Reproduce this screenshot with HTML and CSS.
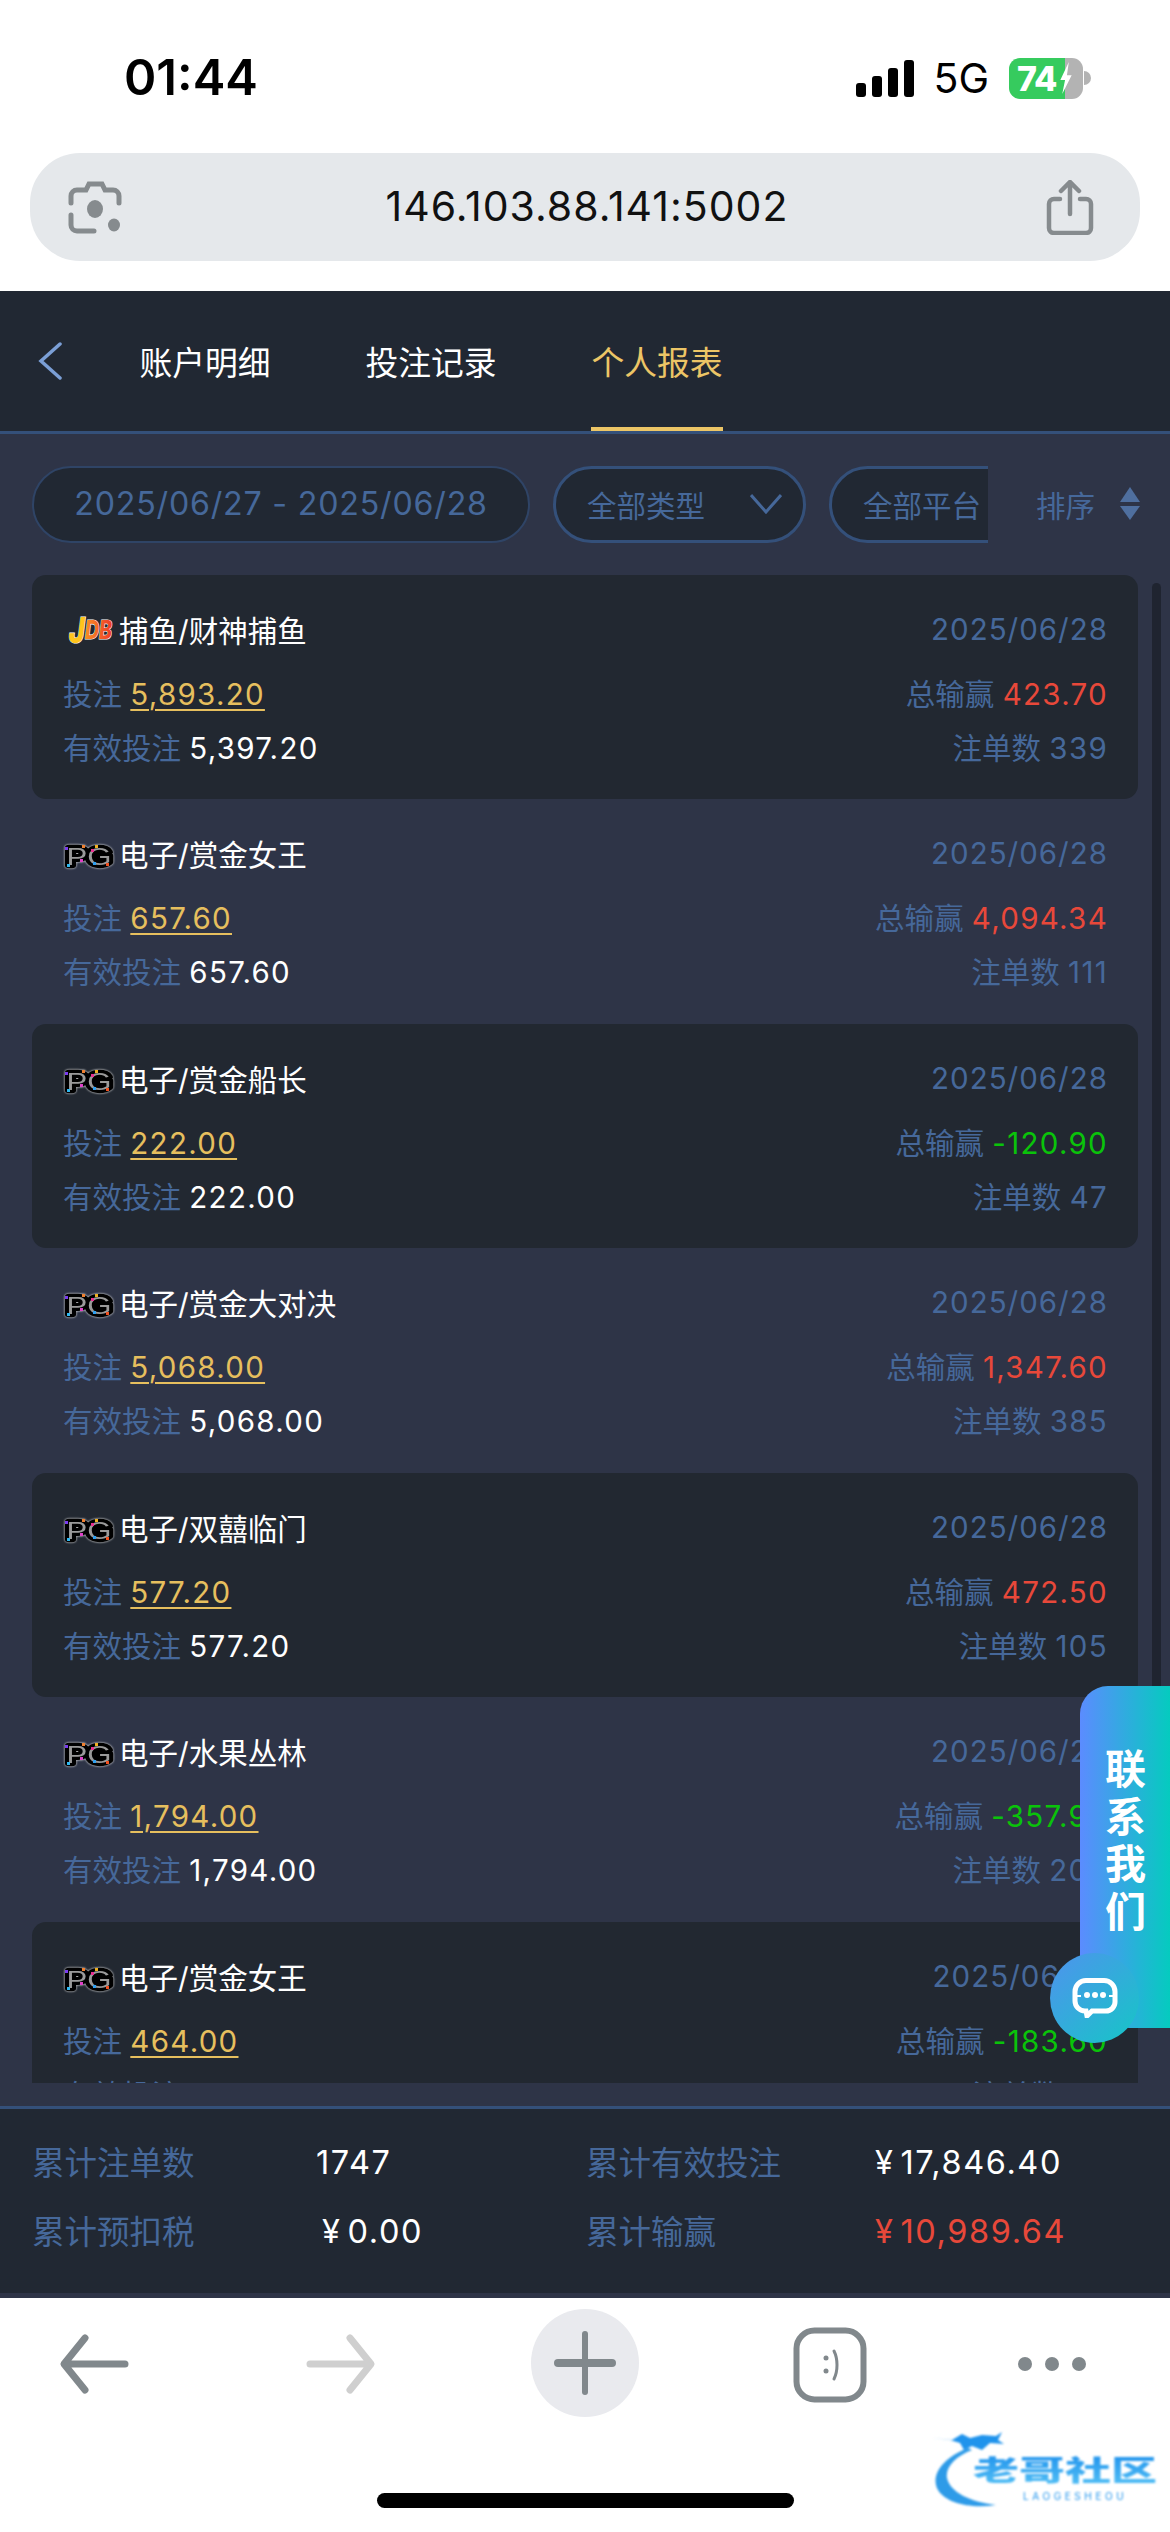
FILE: index.html
```html
<!DOCTYPE html>
<html lang="zh-CN">

<head>
    <meta charset="UTF-8">
    <meta name="viewport" content="width=device-width, initial-scale=1.0">
    <title>个人报表</title>
    <link rel="stylesheet" href="styles.css">
</head>

<body>
    <!-- coloured corners of the PG logo -->
    <svg class="sprite" aria-hidden="true">
        <symbol id="pg-dots" viewBox="0 0 49 24">
            <rect x="1" y="3" width="3" height="3" fill="#7a3cf0" />
            <rect x="3" y="20" width="3" height="3" fill="#30b8f0" />
            <rect x="16" y="15" width="3" height="3" fill="#e040c8" />
            <rect x="18" y="1" width="3" height="3" fill="#f08030" />
            <rect x="27" y="5" width="3" height="3" fill="#e83090" />
            <rect x="31" y="1" width="3" height="3" fill="#f0b020" />
            <rect x="29" y="18" width="3" height="3" fill="#30a0f0" />
            <rect x="42" y="19" width="3" height="3" fill="#f05020" />
        </symbol>
    </svg>

    <div class="phone-top">
        <div class="status-bar">
            <span class="clock">01:44</span>
            <div class="status-right">
                <div class="signal">
                    <i class="bar1"></i><i class="bar2"></i><i class="bar3"></i><i class="bar4"></i>
                </div>
                <span class="network">5G</span>
                <div class="battery">
                    <span class="level">74</span>
                    <svg class="bolt" viewBox="0 0 14 34">
                        <path d="M10 0L1 19h5L3 34l10-20H8z" fill="#fff" />
                    </svg>
                </div>
                <i class="battery-cap"></i>
            </div>
        </div>
        <div class="url-bar">
            <svg class="lens" viewBox="0 0 54 54" fill="none" stroke="#868b8e" stroke-width="5">
                <path d="M3 23V16a6 6 0 0 1 6-6h9l3-6h13l3 6h8a6 6 0 0 1 6 6v7" stroke-linecap="round" />
                <path d="M3 35v10a6 6 0 0 0 6 6h17" stroke-linecap="round" />
                <ellipse cx="27" cy="29" rx="8" ry="9" fill="#868b8e" stroke="none" />
                <ellipse cx="46" cy="45" rx="6" ry="6.500" fill="#868b8e" stroke="none" />
            </svg>
            <span class="url">146.103.88.141:5002</span>
            <svg class="share" viewBox="0 0 48 55" fill="none" stroke="#868b8e" stroke-width="4.500" stroke-linecap="round">
                <path d="M24 3v31M15 11l9-9 9 9" />
                <path d="M14 19H8a5 5 0 0 0-5 5v24a5 5 0 0 0 5 5h32a5 5 0 0 0 5-5V24a5 5 0 0 0-5-5h-6" />
            </svg>
        </div>
    </div>

    <div class="page">
        <div class="tabs">
            <svg class="back" viewBox="0 0 24 38" fill="none" stroke="#7b9fd6" stroke-width="3.500" stroke-linecap="round">
                <path d="M22 2L3 19l19 17" />
            </svg>
            <div class="tab">账户明细</div>
            <div class="tab">投注记录</div>
            <div class="tab active">个人报表</div>
        </div>

        <div class="filters">
            <div class="filter-scroll">
                <div class="pill date-pill">2025/06/27 - 2025/06/28</div>
                <div class="pill type-pill">全部类型
                    <svg class="chevron" viewBox="0 0 32 20" fill="none" stroke="#46689a" stroke-width="3">
                        <path d="M1 1l15 17L31 1" />
                    </svg>
                </div>
                <div class="pill platform-pill">全部平台</div>
            </div>
            <div class="sort">排序
                <div class="sort-arrows">
                    <i class="arrow-up"></i>
                    <i class="arrow-down"></i>
                </div>
            </div>
        </div>

        <div class="list-wrap">
            <div class="report-list">
                <div class="card dark">
                    <div class="row title-row">
                        <div class="game">
                            <svg class="logo jdb" viewBox="0 0 49 28">
                                <defs>
                                    <linearGradient id="jdb-fill" x1="0" y1="0" x2="1" y2="0">
                                        <stop offset="0" stop-color="#ffc020" />
                                        <stop offset="1" stop-color="#ee3a2a" />
                                    </linearGradient>
                                </defs>
                                <text x="5" y="25" textLength="43" lengthAdjust="spacingAndGlyphs"><tspan class="jdb-j">J</tspan><tspan class="jdb-db" dy="-4">DB</tspan></text>
                            </svg>捕鱼/财神捕鱼
                        </div>
                        <span class="muted date">2025/06/28</span>
                    </div>
                    <div class="row">
                        <div class="muted">投注 <span class="stake">5,893.20</span></div>
                        <div class="muted">总输赢 <span class="win">423.70</span></div>
                    </div>
                    <div class="row">
                        <div class="muted">有效投注 <span class="plain">5,397.20</span></div>
                        <div class="muted">注单数 <span class="num">339</span></div>
                    </div>
                </div>

                <div class="card">
                    <div class="row title-row">
                        <div class="game">
                            <svg class="logo pg" viewBox="0 0 49 24"><text x="2.500" y="20.500" textLength="45" lengthAdjust="spacingAndGlyphs">PG</text><use href="#pg-dots" /></svg>电子/赏金女王
                        </div>
                        <span class="muted date">2025/06/28</span>
                    </div>
                    <div class="row">
                        <div class="muted">投注 <span class="stake">657.60</span></div>
                        <div class="muted">总输赢 <span class="win">4,094.34</span></div>
                    </div>
                    <div class="row">
                        <div class="muted">有效投注 <span class="plain">657.60</span></div>
                        <div class="muted">注单数 <span class="num">111</span></div>
                    </div>
                </div>

                <div class="card dark">
                    <div class="row title-row">
                        <div class="game">
                            <svg class="logo pg" viewBox="0 0 49 24"><text x="2.500" y="20.500" textLength="45" lengthAdjust="spacingAndGlyphs">PG</text><use href="#pg-dots" /></svg>电子/赏金船长
                        </div>
                        <span class="muted date">2025/06/28</span>
                    </div>
                    <div class="row">
                        <div class="muted">投注 <span class="stake">222.00</span></div>
                        <div class="muted">总输赢 <span class="loss">-120.90</span></div>
                    </div>
                    <div class="row">
                        <div class="muted">有效投注 <span class="plain">222.00</span></div>
                        <div class="muted">注单数 <span class="num">47</span></div>
                    </div>
                </div>

                <div class="card">
                    <div class="row title-row">
                        <div class="game">
                            <svg class="logo pg" viewBox="0 0 49 24"><text x="2.500" y="20.500" textLength="45" lengthAdjust="spacingAndGlyphs">PG</text><use href="#pg-dots" /></svg>电子/赏金大对决
                        </div>
                        <span class="muted date">2025/06/28</span>
                    </div>
                    <div class="row">
                        <div class="muted">投注 <span class="stake">5,068.00</span></div>
                        <div class="muted">总输赢 <span class="win">1,347.60</span></div>
                    </div>
                    <div class="row">
                        <div class="muted">有效投注 <span class="plain">5,068.00</span></div>
                        <div class="muted">注单数 <span class="num">385</span></div>
                    </div>
                </div>

                <div class="card dark">
                    <div class="row title-row">
                        <div class="game">
                            <svg class="logo pg" viewBox="0 0 49 24"><text x="2.500" y="20.500" textLength="45" lengthAdjust="spacingAndGlyphs">PG</text><use href="#pg-dots" /></svg>电子/双囍临门
                        </div>
                        <span class="muted date">2025/06/28</span>
                    </div>
                    <div class="row">
                        <div class="muted">投注 <span class="stake">577.20</span></div>
                        <div class="muted">总输赢 <span class="win">472.50</span></div>
                    </div>
                    <div class="row">
                        <div class="muted">有效投注 <span class="plain">577.20</span></div>
                        <div class="muted">注单数 <span class="num">105</span></div>
                    </div>
                </div>

                <div class="card">
                    <div class="row title-row">
                        <div class="game">
                            <svg class="logo pg" viewBox="0 0 49 24"><text x="2.500" y="20.500" textLength="45" lengthAdjust="spacingAndGlyphs">PG</text><use href="#pg-dots" /></svg>电子/水果丛林
                        </div>
                        <span class="muted date">2025/06/28</span>
                    </div>
                    <div class="row">
                        <div class="muted">投注 <span class="stake">1,794.00</span></div>
                        <div class="muted">总输赢 <span class="loss">-357.90</span></div>
                    </div>
                    <div class="row">
                        <div class="muted">有效投注 <span class="plain">1,794.00</span></div>
                        <div class="muted">注单数 <span class="num">208</span></div>
                    </div>
                </div>

                <div class="card dark">
                    <div class="row title-row">
                        <div class="game">
                            <svg class="logo pg" viewBox="0 0 49 24"><text x="2.500" y="20.500" textLength="45" lengthAdjust="spacingAndGlyphs">PG</text><use href="#pg-dots" /></svg>电子/赏金女王
                        </div>
                        <span class="muted date">2025/06/27</span>
                    </div>
                    <div class="row">
                        <div class="muted">投注 <span class="stake">464.00</span></div>
                        <div class="muted">总输赢 <span class="loss">-183.60</span></div>
                    </div>
                    <div class="row">
                        <div class="muted">有效投注 <span class="plain">464.00</span></div>
                        <div class="muted">注单数 <span class="num">36</span></div>
                    </div>
                </div>
            </div>
            <i class="scroll-thumb"></i>
        </div>

        <div class="summary">
            <span class="muted">累计注单数</span>
            <span class="plain">1747</span>
            <span class="muted">累计有效投注</span>
            <span class="plain"><span class="yen">¥</span>17,846.40</span>
            <span class="muted">累计预扣税</span>
            <span class="plain tax"><span class="yen">¥</span>0.00</span>
            <span class="muted">累计输赢</span>
            <span class="win"><span class="yen">¥</span>10,989.64</span>
        </div>
    </div>

    <div class="toolbar">
        <svg class="tool" viewBox="0 0 108 108" fill="none" stroke="#81888c" stroke-width="7" stroke-linecap="round" stroke-linejoin="round">
            <path d="M44 29L23 55l21 26M24 55h60" />
        </svg>
        <svg class="tool" viewBox="0 0 108 108" fill="none" stroke="#cfcfcf" stroke-width="7" stroke-linecap="round" stroke-linejoin="round">
            <path d="M64 29l21 26-21 26M24 55h60" />
        </svg>
        <div class="tool new-tab">
            <svg viewBox="0 0 108 108" fill="none" stroke="#81888c" stroke-linecap="round">
                <path d="M54 25v58" stroke-width="6" />
                <path d="M27 54h54" stroke-width="8" />
            </svg>
        </div>
        <svg class="tool" viewBox="0 0 108 108" fill="none" stroke="#81888c">
            <rect x="20.500" y="21.500" width="67" height="69" rx="18" stroke-width="6" />
            <circle cx="50" cy="49" r="2.500" fill="#81888c" stroke="none" />
            <circle cx="50" cy="62" r="2.500" fill="#81888c" stroke="none" />
            <path d="M58 42c4 8 4 20 0 28" stroke-width="3" stroke-linecap="round" />
        </svg>
        <svg class="tool more" viewBox="0 0 108 108" fill="#81888c">
            <circle cx="27" cy="55" r="7" />
            <circle cx="54" cy="55" r="7" />
            <circle cx="81" cy="55" r="7" />
        </svg>
    </div>
    <div class="home-bar"></div>

    <!-- floating contact button -->
    <div class="contact">
        <div class="contact-label">联<br>系<br>我<br>们</div>
    </div>
    <div class="contact-bubble">
        <svg viewBox="0 0 46 40" fill="none">
            <path d="M14 2.500h18a11 11 0 0 1 11 11V24a9 9 0 0 1-9 9H20l-5 5-1-5h-1A10 10 0 0 1 3 23V13.500a11 11 0 0 1 11-11z" stroke="#fff" stroke-width="5" />
            <path d="M2 18h7M37 18h7" stroke="#fff" stroke-width="2" />
            <circle cx="15" cy="17" r="3" fill="#fff" />
            <circle cx="23" cy="17" r="3" fill="#fff" />
            <circle cx="31" cy="17" r="3" fill="#fff" />
        </svg>
    </div>

    <!-- community badge in the corner -->
    <div class="badge">
        <svg class="badge-swoosh" viewBox="0 0 90 80" fill="none">
            <path d="M36 18C10 28-2 46 6 60c8 13 32 19 58 15C38 72 18 62 15 48c-2-11 9-22 25-28z" fill="#2e9be8" />
            <path d="M0 8l20 2 10-6 8 4 12-3 14 1 6-4-4 8 6 4-14-1-8 7-10-4-8 4-4-7-10-3z" fill="#1f93ec" />
        </svg>
        <div class="badge-name">老哥社区</div>
        <div class="badge-sub">LAOGESHEOU</div>
    </div>
</body>

</html>
```
FILE: styles.css
```css
* {
    box-sizing: border-box;
}

body {
    margin: 0;
    width: 1170px;
    height: 2532px;
    overflow: hidden;
    position: relative;
    background: #fff;
    font-family: Inter, "Noto Sans CJK SC", sans-serif;
    font-size: 29.500px;
}

.sprite {
    position: absolute;
    width: 0;
    height: 0;
}

/* top of the phone: status bar and address bar */
.phone-top {
    height: 291px;
    background: #fff;
}

.status-bar {
    height: 153px;
    padding: 54px 79px 0 124px;
    display: flex;
    justify-content: space-between;
    align-items: flex-start;
}

.clock {
    font-size: 49px;
    line-height: 48px;
    font-weight: 600;
    color: #000;
}

.status-right {
    display: flex;
    align-items: center;
    height: 48px;
}

.signal {
    display: flex;
    align-items: flex-end;
    gap: 6px;
    height: 37px;
    margin-right: 19px;
}

.signal i {
    width: 10px;
    border-radius: 3px;
    background: #000;
}

.bar1 {
    height: 14px;
}

.bar2 {
    height: 21px;
}

.bar3 {
    height: 29px;
}

.bar4 {
    height: 37px;
}

.network {
    font-size: 41px;
    line-height: 48px;
    color: #000;
    margin-right: 20px;
}

.battery {
    width: 74px;
    height: 41px;
    border-radius: 11px;
    background: linear-gradient(90deg, #36cb5e 76%, #b3b3b3 76%);
    display: flex;
    align-items: center;
    padding-left: 8px;
    gap: 3px;
}

.level {
    font-size: 34px;
    font-weight: 800;
    letter-spacing: -1px;
    color: #fff;
}

.bolt {
    width: 14px;
    height: 32px;
}

.battery-cap {
    width: 7px;
    height: 14px;
    margin-left: 1px;
    border-radius: 0 7px 7px 0;
    background: #b3b3b3;
}

.url-bar {
    margin: 0 30px;
    height: 108px;
    border-radius: 50px;
    background: #e5e8eb;
    padding: 0 46px 0 38px;
    display: flex;
    justify-content: space-between;
    align-items: center;
}

.lens {
    width: 54px;
    height: 54px;
}

.share {
    width: 48px;
    height: 55px;
}

.url {
    margin-left: 6px;
    padding-bottom: 2px;
    font-size: 41px;
    letter-spacing: 1px;
    color: #111;
}

/* dark report page */
.page {
    height: 2007px;
    background: #2e3447;
    color: #fff;
}

.tabs {
    height: 143px;
    background: #212833;
    border-bottom: 3px solid #34507a;
    display: flex;
    gap: 94px;
    position: relative;
    padding-left: 139px;
}

.back {
    position: absolute;
    left: 38px;
    top: 51px;
    width: 24px;
    height: 38px;
}

.tab {
    width: 132px;
    height: 140px;
    padding-top: 2px;
    border-bottom: 4px solid transparent;
    display: flex;
    justify-content: center;
    align-items: center;
    font-size: 32.800px;
    color: #fff;
}

.tab.active {
    color: #ecc566;
    border-bottom-color: #ecc566;
}

.filters {
    display: flex;
    padding: 32px 31px 32px 32px;
    height: 141px;
}

.filter-scroll {
    display: flex;
    gap: 23px;
    width: 956px;
    flex: none;
    overflow: hidden;
}

.pill {
    flex: none;
    height: 77px;
    padding-bottom: 2px;
    background: #212833;
    border: 3px solid #34507a;
    border-radius: 39px;
    color: #46689a;
    display: flex;
    align-items: center;
}

.date-pill {
    width: 498px;
    border-width: 2px;
    justify-content: center;
    font-size: 32.175px;
    letter-spacing: 0.800px;
    border-color: #2f4466;
}

.type-pill {
    width: 253px;
    padding-left: 31px;
}

.chevron {
    width: 32px;
    height: 20px;
    margin-left: 45px;
}

.platform-pill {
    width: 253px;
    padding-left: 31px;
}

.sort {
    flex: none;
    height: 77px;
    padding-left: 48px;
    padding-bottom: 2px;
    color: #46689a;
    white-space: nowrap;
    display: flex;
    align-items: center;
}

.sort-arrows {
    margin-left: 25px;
    display: flex;
    flex-direction: column;
    gap: 4px;
}

.sort-arrows i {
    display: block;
    width: 0;
    height: 0;
    border-left: 10px solid transparent;
    border-right: 10px solid transparent;
}

.arrow-up {
    border-bottom: 15px solid #4f6f9f;
}

.arrow-down {
    border-top: 14px solid #4f6f9f;
}

.list-wrap {
    position: relative;
    height: 1531px;
    padding: 0 32px;
}

.report-list {
    height: 1508px;
    overflow: hidden;
}

.scroll-thumb {
    position: absolute;
    left: 1152px;
    top: 8px;
    width: 9px;
    height: 1220px;
    border-radius: 5px;
    background: #1f2430;
}

.card {
    height: 224.450px;
    padding: 27px 30px 26px 31px;
    border-radius: 14px;
}

.card.dark {
    background: #222831;
}

.row {
    height: 54px;
    display: flex;
    justify-content: space-between;
    align-items: center;
    white-space: nowrap;
}

.title-row {
    margin-bottom: 9px;
}

.game {
    display: flex;
    align-items: center;
    color: #fff;
}

.logo {
    flex: none;
    width: 49px;
    height: 28px;
    margin: 6px 6px 0 1px;
    overflow: visible;
}

.jdb text {
    font: italic 800 26px Inter, sans-serif;
    stroke: #fff;
    stroke-width: 1.200px;
    paint-order: stroke;
}

.jdb-j {
    font-size: 36px;
    fill: #ffc41c;
}

.jdb-db {
    fill: url(#jdb-fill);
}

.logo.pg {
    height: 24px;
    filter: drop-shadow(0 0 1px #fff);
}

.pg text {
    font: 400 24px "Liberation Sans", sans-serif;
    fill: #9a9a9a;
    stroke: #000;
    stroke-width: 6.500px;
    stroke-linejoin: round;
    paint-order: stroke;
}

.muted {
    color: #46689a;
}

.plain {
    color: #fff;
}

.date {
    letter-spacing: 1px;
}

.num,
.plain,
.stake,
.win,
.loss {
    letter-spacing: 1.300px;
}

.stake {
    color: #e6bf5e;
    text-decoration: underline;
    text-decoration-thickness: 2px;
    text-underline-offset: 4px;
}

.win {
    color: #e8483a;
}

.loss {
    color: #0ac30a;
}

/* totals under the list */
.summary {
    height: 191px;
    background: #212833;
    border-top: 3px solid #34507a;
    border-bottom: 4px solid #2e3447;
    padding: 17px 0 0 32px;
    display: grid;
    grid-template-columns: 284px 270px 289px 1fr;
    grid-auto-rows: 69px;
    align-items: center;
    font-size: 32.500px;
}

.summary .plain,
.summary .win {
    padding-top: 3px;
    letter-spacing: 1.600px;
}

.yen {
    margin-right: 6px;
}

.summary .tax {
    padding-left: 6px;
}

/* browser toolbar */
.toolbar {
    padding: 11px 0 0 41px;
    display: flex;
    gap: 137px;
}

.tool {
    flex: none;
    width: 108px;
    height: 108px;
}

.new-tab {
    border-radius: 50%;
    background: #e9eaee;
}

.more {
    margin-left: -23px;
}

.home-bar {
    width: 417px;
    height: 15px;
    margin: 76px auto 0;
    border-radius: 8px;
    background: #000;
}

/* floating contact button */
.contact {
    position: absolute;
    left: 1080px;
    top: 1686px;
    width: 90px;
    height: 342px;
    border-radius: 28px 0 0 50px;
    background: linear-gradient(90deg, #5b8cff, #05cbbf);
    padding: 60px 0 0 25px;
}

.contact-label {
    font-size: 41px;
    line-height: 47.500px;
    font-weight: 700;
    color: #fff;
}

.contact-bubble {
    position: absolute;
    left: 1050px;
    top: 1953px;
    width: 89px;
    height: 90px;
    border-radius: 50%;
    background: linear-gradient(135deg, #4f93ee, #15c6c6);
    display: flex;
    justify-content: center;
    align-items: center;
}

.contact-bubble svg {
    width: 46px;
    height: 40px;
}

/* community badge */
.badge {
    position: absolute;
    left: 932px;
    top: 2430px;
    width: 225px;
    height: 80px;
    filter: blur(0.8px);
}

.badge-swoosh {
    position: absolute;
    left: 0;
    top: 0;
    width: 90px;
    height: 80px;
}

.badge-name {
    position: absolute;
    left: 41px;
    top: 10px;
    width: 186px;
    font-size: 46px;
    line-height: 60px;
    font-weight: 900;
    white-space: nowrap;
    transform: scaleY(0.62);
    background: linear-gradient(180deg, #1c8fec, #58c4f6);
    -webkit-background-clip: text;
    background-clip: text;
    color: transparent;
}

.badge-sub {
    position: absolute;
    left: 91px;
    top: 60px;
    font-size: 10px;
    letter-spacing: 3.600px;
    color: #1f93ec;
    white-space: nowrap;
}
```
